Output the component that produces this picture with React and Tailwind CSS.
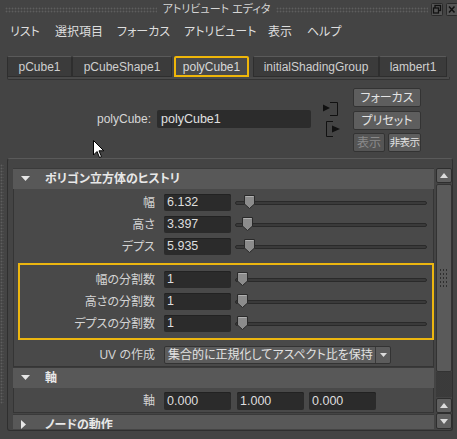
import React from "react"

const dots = "bg-[radial-gradient(circle,#5e5e5e_0.8px,transparent_1.1px)] bg-size-[3px_3px]"

function Field({ value, className = "" }) {
  return (
    <div className={`flex h-[17px] items-center rounded-[2px] bg-[#2b2b2b] pl-[3px] text-[12.5px] text-[#dedede] shadow-[inset_0_1px_0_#222] ${className}`}>
      {value}
    </div>
  )
}

function Knob({ left }) {
  return (
    <svg width="13" height="16" viewBox="0 0 13 16" className="absolute top-[0px]" style={{ left }}>
      <path d="M1.5 1.5 H11.5 V10 L6.5 14.5 L1.5 10 Z" fill="#8c8c8c" stroke="#2a2a2a" strokeWidth="1" />
      <path d="M2.5 2.5 H10.5" stroke="#b0b0b0" strokeWidth="1" />
    </svg>
  )
}

function NumRow({ label, value, knob, boxed }) {
  return (
    <div className="flex h-[17px] items-center">
      <span className={`${boxed ? "w-[135px]" : "w-[141px]"} text-right text-[12px] text-[#d4d4d4]`}>{label}</span>
      <Field className="ml-[9px] w-[67px]" value={value} />
      <div className="relative ml-[4px] flex h-[17px] w-[192px] items-center">
        <div className="h-[4px] w-full rounded-[2px] border border-[#2a2a2a] bg-[#3a3a3a]" />
        <Knob left={knob} />
      </div>
    </div>
  )
}

function SectionHeader({ title, open = true }) {
  return (
    <div className="mx-[1px] flex h-[21px] items-center border-t border-[#3a3a3a] bg-[#585858]">
      <span className="ml-[8px] w-[24px]">
        {open ? (
          <svg width="10" height="6" viewBox="0 0 10 6"><path d="M0 0 H9 L4.5 5 Z" fill="#e6e6e6" /></svg>
        ) : (
          <svg width="6" height="10" viewBox="0 0 6 10"><path d="M0 0 V9 L5 4.5 Z" fill="#e6e6e6" /></svg>
        )}
      </span>
      <span className="text-[12px] font-bold text-[#e8e8e8]">{title}</span>
    </div>
  )
}

function ScrollBtn({ up, className = "" }) {
  return (
    <div className={`flex items-center justify-center rounded-[2px] border border-[#2e2e2e] bg-[#5f5f5f] ${className}`}>
      <svg width="8" height="5" viewBox="0 0 8 5">
        {up ? <path d="M0 5 L4 0 L8 5 Z" fill="#dcdcdc" /> : <path d="M0 0 L4 5 L8 0 Z" fill="#dcdcdc" />}
      </svg>
    </div>
  )
}

function Tab({ label, className = "", active }) {
  return (
    <div
      className={`flex h-[21px] items-center justify-center rounded-t-[2px] text-[12px] ${
        active ? "border-2 border-[#efb609] bg-[#4a4a4a] text-[#d8d8d8]" : "border border-[#2e2e2e] border-t-[#5a5a5a] bg-[#3b3b3b] text-[#cfcfcf]"
      } ${className}`}
    >
      {label}
    </div>
  )
}

function Btn({ label, className = "", disabled }) {
  return (
    <div
      className={`flex h-[19px] items-center justify-center overflow-hidden whitespace-nowrap rounded-[2px] border border-[#333] ${
        disabled ? "bg-[#555] text-[#8a8a8a]" : "bg-[#5e5e5e] text-[#e4e4e4]"
      } ${className}`}
    >
      {label}
    </div>
  )
}

export default function App() {
  return (
    <div className="relative h-[439px] w-[457px] overflow-hidden bg-[#444444] font-['Liberation_Sans','Noto_Sans_CJK_JP',sans-serif] text-[#dcdcdc] [font-feature-settings:'palt']">
      {/* title bar */}
      <div className="flex h-[19px] items-center">
        <div className={`ml-[5px] h-[6px] flex-1 ${dots}`} />
        <span className="px-[6px] text-[11px] text-[#d6d6d6]">アトリビュート エディタ</span>
        <div className={`h-[6px] flex-1 ${dots}`} />
        <div className="ml-[3px] flex gap-[3px]">
          <svg width="12" height="13" viewBox="0 0 12 13">
            <rect x="0.5" y="0.5" width="11" height="12" rx="1" fill="#555" stroke="#2a2a2a" />
            <rect x="4" y="2.5" width="5.5" height="5" fill="none" stroke="#111" strokeWidth="1.3" />
            <rect x="2.5" y="5" width="5" height="5" fill="#555" stroke="#111" strokeWidth="1.3" />
          </svg>
          <svg width="11" height="13" viewBox="0 0 11 13">
            <rect x="0.5" y="0.5" width="11" height="12" rx="1" fill="#555" stroke="#2a2a2a" />
            <path d="M3 3.5 L8.5 9.5 M8.5 3.5 L3 9.5" stroke="#111" strokeWidth="1.5" />
          </svg>
        </div>
      </div>

      {/* menu bar */}
      <div className="flex h-[26px] items-center pl-[10px] text-[12px] text-[#dedede]">
        <span className="w-[45px]">リスト</span>
        <span className="w-[62px]">選択項目</span>
        <span className="w-[67px]">フォーカス</span>
        <span className="w-[84px]">アトリビュート</span>
        <span className="w-[39px]">表示</span>
        <span>ヘルプ</span>
      </div>

      {/* tabs */}
      <div className="mt-[11px] flex pl-[7px]">
        <Tab label="pCube1" className="w-[65px]" />
        <Tab label="pCubeShape1" className="w-[100px]" />
        <Tab label="polyCube1" className="ml-[2px] w-[75px]" active />
        <Tab label="initialShadingGroup" className="ml-[4px] w-[126px]" />
        <Tab label="lambert1" className="w-[68px]" />
      </div>
      <div className="mx-[7px] h-[3px] rounded-b-[2px] border border-t-0 border-[#333] bg-[#4a4a4a]" />

      {/* node name area */}
      <div className="flex h-[78px]">
        <div className="flex w-[311px] items-center justify-end">
          <span className="mr-[6px] text-[12px] text-[#d6d6d6]">polyCube:</span>
          <div className="flex h-[18px] w-[154px] items-center rounded-[2px] bg-[#2c2c2c] pl-[4px] text-[12.5px] text-[#e0e0e0]">polyCube1</div>
        </div>
        <div className="ml-[12px] flex w-[18px] flex-col pt-[22px]">
          <svg width="17" height="14" viewBox="0 0 17 14">
            <path d="M0 2.5 L7 6 L0 9.5 Z" fill="#111" />
            <path d="M7 0.5 H14.5 V13.5 H7" fill="none" stroke="#111" strokeWidth="1" />
          </svg>
          <svg width="17" height="16" viewBox="0 0 17 16" className="ml-[3px] mt-[5px]">
            <path d="M7 0.5 H0.5 V15.5 H7" fill="none" stroke="#111" strokeWidth="1" />
            <path d="M6 4.5 L14 8 L6 11.5 Z" fill="#111" />
          </svg>
        </div>
        <div className="ml-[12px] flex w-[68px] flex-col pt-[8px]">
          <Btn label="フォーカス" className="text-[12px]" />
          <Btn label="プリセット" className="mt-[4px] text-[12px]" />
          <div className="mt-[3px] flex gap-[3px]">
            <Btn label="表示" className="w-[32px] text-[12px]" disabled />
            <Btn label="非表示" className="w-[33px] text-[10.5px] tracking-[-0.6px]" />
          </div>
        </div>
      </div>

      {/* attribute frame */}
      <div className="flex">
        <div className={`mt-[6px] h-[240px] w-[4px] ${dots}`} />
        <div className="ml-[3px] flex h-[273px] w-[446px] rounded-[3px] border border-[#2f2f2f] border-t-[#5a5a5a] pl-[4px] pt-[9px]">
          <div className="h-[261px] w-[423px] overflow-hidden">
            <SectionHeader title="ポリゴン立方体のヒストリ" />
            <div className="mx-[1px] flex flex-col border-x border-b border-[#353535] bg-[#494949] pb-[2px] pt-[5px]">
              <div className="flex flex-col gap-[5px]">
                <NumRow label="幅" value="6.132" knob={8} />
                <NumRow label="高さ" value="3.397" knob={6} />
                <NumRow label="デプス" value="5.935" knob={8} />
              </div>
              <div className="ml-[4px] mt-[8px] flex w-[416px] flex-col gap-[5px] border-2 border-[#ecb610] py-[6px]">
                <NumRow label="幅の分割数" value="1" knob={1} boxed />
                <NumRow label="高さの分割数" value="1" knob={1} boxed />
                <NumRow label="デプスの分割数" value="1" knob={1} boxed />
              </div>
              <div className="mt-[6px] flex h-[18px] items-center">
                <span className="w-[141px] text-right text-[12px] text-[#d4d4d4]">UV の作成</span>
                <div className="ml-[9px] flex h-[18px] w-[227px] items-center rounded-[2px] border border-[#333] bg-[#5c5c5c]">
                  <span className="flex-1 pl-[3px] text-[12px] text-[#e2e2e2]">集合的に正規化してアスペクト比を保持</span>
                  <div className="flex h-full w-[15px] items-center justify-center border-l border-[#3a3a3a]">
                    <svg width="7" height="4" viewBox="0 0 7 4"><path d="M0 0 H7 L3.5 4 Z" fill="#dcdcdc" /></svg>
                  </div>
                </div>
              </div>
            </div>
            <SectionHeader title="軸" />
            <div className="mx-[1px] border-x border-b border-[#353535] bg-[#494949] pb-[2px] pt-[4px]">
              <div className="flex h-[18px] items-center">
                <span className="w-[141px] text-right text-[12px] text-[#d4d4d4]">軸</span>
                <Field className="ml-[9px] h-[18px] w-[67px]" value="0.000" />
                <Field className="ml-[6px] h-[18px] w-[67px]" value="1.000" />
                <Field className="ml-[5px] h-[18px] w-[67px]" value="0.000" />
              </div>
            </div>
            <div className="mt-[1px]">
              <SectionHeader title="ノードの動作" open={false} />
            </div>
          </div>
          {/* scrollbar */}
          <div className="ml-[1px] flex w-[16px] flex-col">
            <ScrollBtn up className="h-[15px]" />
            <div className="mt-[1px] flex h-[188px] items-center justify-center rounded-[2px] border border-[#333] bg-[#5a5a5a]">
              <div className="h-[20px] w-[10px] bg-[radial-gradient(circle,#2e2e2e_0.8px,transparent_1.1px)] bg-size-[3px_4px]" />
            </div>
            <div className="h-[25px] bg-[#4a4a4a] bg-[radial-gradient(circle,#3a3a3a_0.7px,transparent_1px)] bg-size-[2px_2px]" />
            <ScrollBtn up className="mt-[1px] h-[15px]" />
            <ScrollBtn className="h-[16px]" />
          </div>
        </div>
      </div>

      {/* mouse cursor */}
      <svg width="12" height="19" viewBox="0 0 12 19" className="absolute left-[93px] top-[140px]">
        <path d="M0.5 0.5 L0.5 15 L4 11.5 L6.5 17.5 L8.5 16.6 L6 10.8 L10.8 10.8 Z" fill="#fff" stroke="#000" strokeWidth="1" />
      </svg>
    </div>
  )
}
